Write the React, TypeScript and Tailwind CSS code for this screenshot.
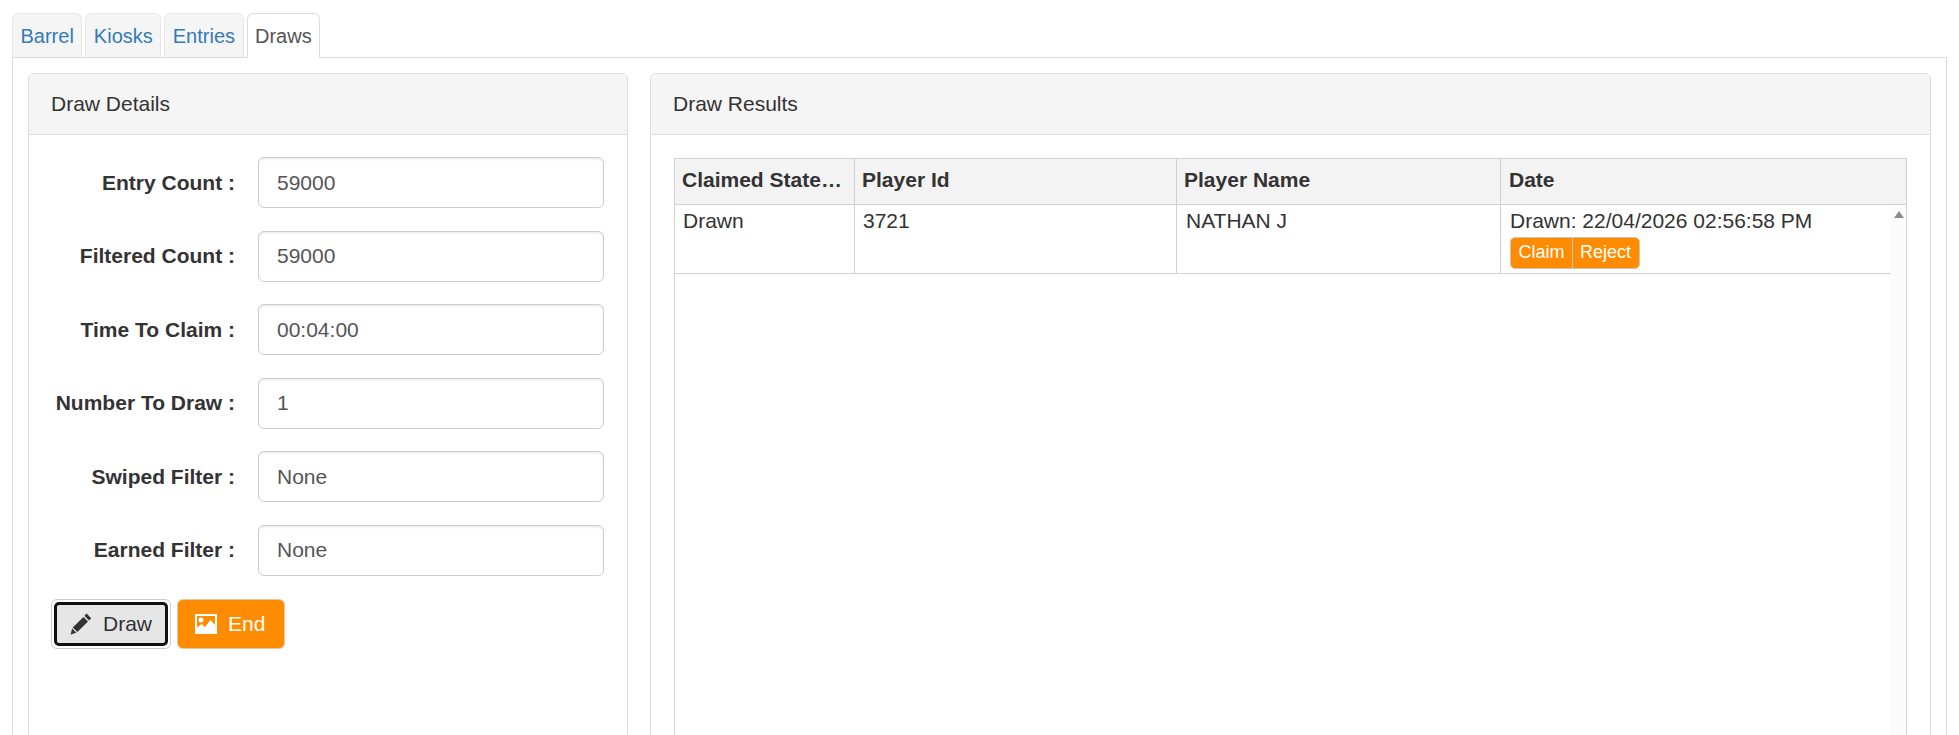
const fields = [
  ["Entry Count :", "59000"],
  ["Filtered Count :", "59000"],
  ["Time To Claim :", "00:04:00"],
  ["Number To Draw :", "1"],
  ["Swiped Filter :", "None"],
  ["Earned Filter :", "None"],
];

const tabs = [
  { name: "Barrel", active: false },
  { name: "Kiosks", active: false },
  { name: "Entries", active: false },
  { name: "Draws", active: true },
];

function PencilIcon() {
  return (
    <svg width="22" height="22" viewBox="0 0 22 22" className="shrink-0 text-[#333]">
      <path fill="currentColor" d="M16.6 0.6 L21.2 5.2 L19 7.4 L14.4 2.8 Z M13.4 3.9 L18 8.5 L7.4 19.1 L2.8 14.5 Z M2.1 15.6 L6.3 19.8 L0.6 21.4 Z" />
    </svg>
  );
}

function PictureIcon() {
  return (
    <svg width="22" height="20" viewBox="0 0 22 20" className="shrink-0 text-white">
      <path fill="currentColor" fillRule="evenodd" d="M0 0 H22 V20 H0 Z M2 2 V13.5 L6.5 10 L10 13 L15.5 6 L20 11 V2 Z M6 3.5 A2.5 2.5 0 1 1 6 8.5 A2.5 2.5 0 1 1 6 3.5 Z" />
    </svg>
  );
}

function Panel({ title, className, children }: { title: string; className: string; children: React.ReactNode }) {
  return (
    <section className={`flex h-[720px] flex-col rounded-[6px] border border-[#ddd] bg-white ${className}`}>
      <h2 className="h-[61px] shrink-0 rounded-t-[5px] border-b border-[#ddd] bg-[#f5f5f5] px-[22px] pt-[15px] text-[21px] leading-[30px] font-normal text-[#333]">
        {title}
      </h2>
      {children}
    </section>
  );
}

export default function App() {
  return (
    <div className="h-[735px] overflow-hidden bg-white px-[12px] pt-[13px] font-['Liberation_Sans',Arial,sans-serif] text-[21px] leading-[30px] text-[#333]">
      <nav className="relative z-10 -mb-px flex h-[45px] gap-[3px]">
        {tabs.map((t) => (
          <a
            key={t.name}
            className={
              t.active
                ? "h-[45px] rounded-t-[6px] border border-b-0 border-[#ddd] bg-white px-[7.5px] pt-[7px] text-[20px] leading-[30px] text-[#555]"
                : "h-[45px] rounded-t-[6px] border border-[#e8e8e8] border-b-[#ddd] bg-[#f5f5f5] px-[7.5px] pt-[7px] text-[20px] leading-[30px] text-[#337ab7]"
            }
          >
            {t.name}
          </a>
        ))}
      </nav>
      <main className="flex h-[700px] gap-[22px] border border-b-0 border-[#ddd] px-[15px] pt-[15px]">
        <Panel title="Draw Details" className="w-[600px] shrink-0">
          <div className="flex flex-col gap-[22.5px] px-[23px] pt-[22px]">
            {fields.map(([label, value]) => (
              <div key={label} className="flex items-center gap-[23px]">
                <label className="w-[183px] shrink-0 text-right font-bold whitespace-nowrap">{label}</label>
                <div className="flex h-[51px] flex-1 items-center rounded-[6px] border border-[#ccc] bg-white px-[18px] text-[#555] shadow-[inset_0_1.5px_1.5px_rgba(0,0,0,0.075)]">
                  {value}
                </div>
              </div>
            ))}
            <div className="mt-[0.5px] -ml-px flex gap-[6px]">
              <button className="h-[50px] w-[120px] rounded-[6px] border border-[#ccc] bg-white p-[2px]">
                <span className="flex h-full items-center gap-[11px] rounded-[5px] border-[3px] border-[#111] bg-[#e6e6e6] pl-[13px] text-[#333]">
                  <PencilIcon />
                  Draw
                </span>
              </button>
              <button className="flex h-[50px] w-[108px] items-center gap-[11px] rounded-[6px] border border-[#e3c9a4] bg-[#ff8c00] pl-[17px] text-white">
                <PictureIcon />
                End
              </button>
            </div>
          </div>
        </Panel>
        <Panel title="Draw Results" className="flex-1">
          <div className="flex flex-1 flex-col px-[23px] pt-[23px]">
            <div className="flex h-[600px] flex-col border border-[#d2d2d2]">
              <div className="grid h-[46px] shrink-0 grid-cols-[180px_322px_324px_1fr] border-b border-[#d2d2d2] bg-[#f3f3f3] font-bold">
                <div className="truncate border-r border-[#d2d2d2] pt-[6px] pl-[7px]">Claimed State…</div>
                <div className="border-r border-[#d2d2d2] pt-[6px] pl-[7px]">Player Id</div>
                <div className="border-r border-[#d2d2d2] pt-[6px] pl-[7px]">Player Name</div>
                <div className="pt-[6px] pl-[8px]">Date</div>
              </div>
              <div className="flex flex-1">
                <div className="flex-1">
                  <div className="grid h-[69px] grid-cols-[180px_322px_324px_1fr] border-b border-[#d2d2d2]">
                    <div className="border-r border-[#d2d2d2] pt-[1px] pl-[8px]">Drawn</div>
                    <div className="border-r border-[#d2d2d2] pt-[1px] pl-[8px]">3721</div>
                    <div className="border-r border-[#d2d2d2] pt-[1px] pl-[9px]">NATHAN J</div>
                    <div className="pt-[1px] pl-[9px]">
                      <div>Drawn: 22/04/2026 02:56:58 PM</div>
                      <div className="mt-[1px] flex h-[32px] w-[130px] rounded-[5px] border border-[#d0c4b0] bg-[#ff8c00] text-[18px] leading-[28px] text-white">
                        <span className="border-r border-[#c3c9cf] px-[7.5px]">Claim</span>
                        <span className="px-[7px]">Reject</span>
                      </div>
                    </div>
                  </div>
                </div>
                <div className="flex w-[15px] shrink-0 justify-center bg-[#fbfbfb] pt-[6px]">
                  <span className="h-0 w-0 border-x-[5px] border-b-[7px] border-x-transparent border-b-[#8c8c8c]" />
                </div>
              </div>
            </div>
          </div>
        </Panel>
      </main>
    </div>
  );
}
